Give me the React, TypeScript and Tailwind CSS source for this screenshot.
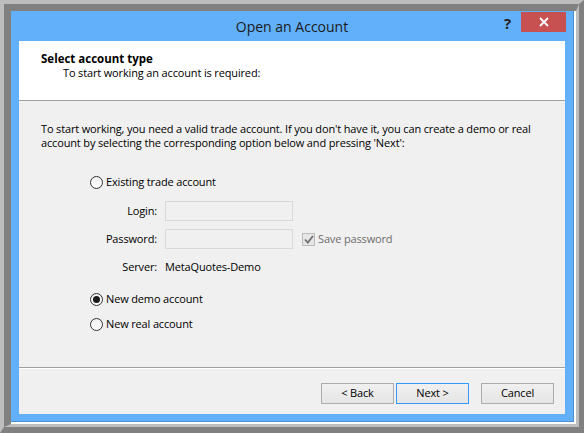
import React from "react";

function Radio({ checked }: { checked?: boolean }) {
  return (
    <span className="w-[13px] h-[13px] rounded-full border border-[#333333] bg-gradient-to-b from-[#f0f0f0] to-white flex items-center justify-center shrink-0">
      {checked && <span className="w-[7px] h-[7px] rounded-full bg-[#1b1b1b]" />}
    </span>
  );
}

function Btn({ children, focused }: { children: React.ReactNode; focused?: boolean }) {
  return (
    <button
      className={
        focused
          ? "w-[73px] h-[21px] border border-[#3399ff] bg-gradient-to-b from-[#f0f0f0] to-[#e5e5e5] text-[11px] text-black flex items-center justify-center"
          : "w-[73px] h-[21px] border border-[#acacac] bg-gradient-to-b from-[#f0f0f0] to-[#e5e5e5] text-[11px] text-black flex items-center justify-center"
      }
    >
      {children}
    </button>
  );
}

export default function App() {
  return (
    <div className="w-[584px] h-[433px] box-border border-t-4 border-l-4 border-r-[5px] border-b-[6px] border-t-[#bdbdbd] border-l-[#bdbdbd] border-r-[#808080] border-b-[#808080] font-['Open_Sans',sans-serif] text-[11px] tracking-[-0.15px] text-black">
      <div className="h-full border-t-[7px] border-l-[7px] border-r-[3px] border-b-[3px] border-t-[#808080] border-l-[#808080] border-r-[#bdbdbd] border-b-[#bdbdbd]">
        <div className="h-full border-r-2 border-b-2 border-white">
          <div className="h-full flex flex-col bg-[#62b0f9] border-r border-b border-[#4a8fd4] px-2 pb-[7px] relative">
            {/* title bar */}
            <div className="h-[30px] flex items-center justify-center relative">
              <span className="text-[14px] tracking-normal text-[#1a1a1a] leading-none mt-[1px]">Open an Account</span>
              <div className="absolute right-[-1px] top-[1px] flex items-start">
                <span className="text-[15px] font-bold text-[#222] leading-none mr-[10px] mt-[4px]">?</span>
                <span className="w-[45px] h-[20px] bg-[#c75050] flex items-center justify-center">
                  <svg width="10" height="10" viewBox="0 0 10 10">
                    <path d="M1 1L9 9M9 1L1 9" stroke="white" strokeWidth="1.8" />
                  </svg>
                </span>
              </div>
            </div>
            {/* content */}
            <div className="flex-1 flex flex-col bg-[#f0f0f0]">
              <div className="h-[59px] bg-white pl-[22px] pt-[10px] leading-[15px]">
                <div className="font-bold text-[11.5px] tracking-normal">Select account type</div>
                <div className="pl-[22px] mt-[-1px]">To start working an account is required:</div>
              </div>
              <div className="h-px bg-[#a0a0a0]" />
              <div className="flex-1 flex flex-col pl-[22px] pt-[21px]">
                <div className="leading-[14px] whitespace-nowrap">
                  To start working, you need a valid trade account. If you don't have it, you can create a demo or real
                  <br />
                  account by selecting the corresponding option below and pressing 'Next':
                </div>
                <div className="ml-[49px] flex flex-col">
                  <div className="h-[16px] mt-[24px] flex items-center gap-[3px]">
                    <Radio />
                    <span>Existing trade account</span>
                  </div>
                  <div className="h-[20px] mt-[11px] flex items-center">
                    <span className="w-[67px] text-right">Login:</span>
                    <span className="ml-[8px] w-[128px] h-[20px] border border-[#d9d9d9] bg-[#f0f0f0]" />
                  </div>
                  <div className="h-[20px] mt-[8px] flex items-center">
                    <span className="w-[67px] text-right">Password:</span>
                    <span className="ml-[8px] w-[128px] h-[20px] border border-[#d9d9d9] bg-[#f0f0f0]" />
                    <span className="ml-[9px] w-[13px] h-[13px] border border-[#bcbcbc] bg-[#e6e6e6] flex items-center justify-center">
                      <svg width="10" height="9" viewBox="0 0 10 9">
                        <path d="M1 4.5L3.8 7.5L9 1" stroke="#707070" strokeWidth="1.8" fill="none" />
                      </svg>
                    </span>
                    <span className="ml-[3px] text-[#6d6d6d]">Save password</span>
                  </div>
                  <div className="h-[16px] mt-[10px] flex items-center">
                    <span className="w-[67px] text-right">Server:</span>
                    <span className="ml-[8px]">MetaQuotes-Demo</span>
                  </div>
                  <div className="h-[16px] mt-[16px] flex items-center gap-[3px]">
                    <Radio checked />
                    <span>New demo account</span>
                  </div>
                  <div className="h-[16px] mt-[9px] flex items-center gap-[3px]">
                    <Radio />
                    <span>New real account</span>
                  </div>
                </div>
              </div>
              <div className="h-px bg-[#a0a0a0]" />
              <div className="h-px bg-white" />
              <div className="flex justify-end items-start pt-[14px] pb-[10px] pr-[11px]">
                <Btn>&lt; Back</Btn>
                <span className="w-[2px]" />
                <Btn focused>Next &gt;</Btn>
                <span className="w-[12px]" />
                <Btn>Cancel</Btn>
              </div>
            </div>
          </div>
        </div>
      </div>
    </div>
  );
}
